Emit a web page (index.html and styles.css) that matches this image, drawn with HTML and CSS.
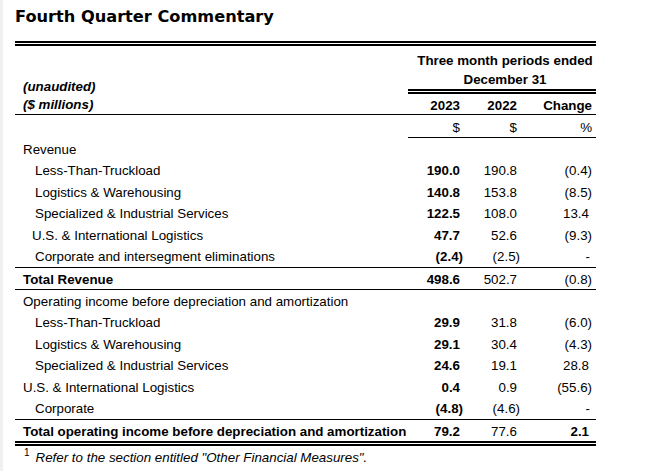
FILE: index.html
```html
<!DOCTYPE html>
<html>
<head>
<meta charset="utf-8">
<link rel="stylesheet" href="styles.css">
</head>
<body>
<div class="page">
  <h1 class="title">Fourth Quarter Commentary</h1>
  <table class="fin">
    <colgroup>
      <col class="c-label"><col class="c-a"><col class="c-b"><col class="c-c">
    </colgroup>
    <tr class="hdr1">
      <td class="lbl-hdr" rowspan="2"><span>(unaudited)</span><br><span>($ millions)</span></td>
      <td colspan="3" class="period">Three month periods ended<br>December 31</td>
    </tr>
    <tr class="hdr2">
      <td class="num pos">2023</td><td class="num pos">2022</td><td class="num neg">Change</td>
    </tr>
    <tr class="units">
      <td></td><td class="num pos ul">$</td><td class="num pos ul">$</td><td class="num neg ul">%</td>
    </tr>
    <tr class="row"><td class="lbl">Revenue</td><td></td><td></td><td></td></tr>
    <tr class="row"><td class="lbl sub">Less-Than-Truckload</td><td class="num pos b">190.0</td><td class="num pos">190.8</td><td class="num neg">(0.4)</td></tr>
    <tr class="row"><td class="lbl sub">Logistics &amp; Warehousing</td><td class="num pos b">140.8</td><td class="num pos">153.8</td><td class="num neg">(8.5)</td></tr>
    <tr class="row"><td class="lbl sub">Specialized &amp; Industrial Services</td><td class="num pos b">122.5</td><td class="num pos">108.0</td><td class="num cpos">13.4</td></tr>
    <tr class="row"><td class="lbl sub2">U.S. &amp; International Logistics</td><td class="num pos b">47.7</td><td class="num pos">52.6</td><td class="num neg">(9.3)</td></tr>
    <tr class="row"><td class="lbl sub">Corporate and intersegment eliminations</td><td class="num neg b">(2.4)</td><td class="num neg">(2.5)</td><td class="num dash">-</td></tr>
    <tr class="row total"><td class="lbl b">Total Revenue</td><td class="num pos b">498.6</td><td class="num pos">502.7</td><td class="num neg">(0.8)</td></tr>
    <tr class="row"><td class="lbl">Operating income before depreciation and amortization</td><td></td><td></td><td></td></tr>
    <tr class="row"><td class="lbl sub">Less-Than-Truckload</td><td class="num pos b">29.9</td><td class="num pos">31.8</td><td class="num neg">(6.0)</td></tr>
    <tr class="row"><td class="lbl sub">Logistics &amp; Warehousing</td><td class="num pos b">29.1</td><td class="num pos">30.4</td><td class="num neg">(4.3)</td></tr>
    <tr class="row"><td class="lbl sub">Specialized &amp; Industrial Services</td><td class="num pos b">24.6</td><td class="num pos">19.1</td><td class="num cpos">28.8</td></tr>
    <tr class="row"><td class="lbl">U.S. &amp; International Logistics</td><td class="num pos b">0.4</td><td class="num pos">0.9</td><td class="num neg">(55.6)</td></tr>
    <tr class="row"><td class="lbl sub">Corporate</td><td class="num neg b">(4.8)</td><td class="num neg">(4.6)</td><td class="num dash">-</td></tr>
    <tr class="row grand"><td class="lbl b">Total operating income before depreciation and amortization</td><td class="num pos b">79.2</td><td class="num pos">77.6</td><td class="num cpos b">2.1</td></tr>
  </table>
  <p class="note"><sup>1</sup><span>Refer to the section entitled "Other Financial Measures".</span></p>
</div>
</body>
</html>
```

FILE: styles.css
```css
html, body {
  margin: 0;
  padding: 0;
  background: #fff;
}
body {
  font-family: "Liberation Sans", Arial, sans-serif;
  font-size: 13.33px;
  color: #000;
}
.page {
  border-left: 3px solid #f0f0f0;
  padding-left: 12px;
  min-height: 471px;
  box-sizing: border-box;
}
.title {
  font-family: "DejaVu Sans", Verdana, sans-serif;
  font-weight: bold;
  font-size: 16.2px;
  line-height: 20px;
  margin: 0;
  padding-top: 7px;
  height: 41px;
  box-sizing: border-box;
}
.fin {
  border-collapse: collapse;
  width: 581px;
  border-top: 5px double #000;
}
.fin td {
  padding: 0;
  white-space: nowrap;
}
.c-label { width: 393px; }
.c-a { width: 56px; }
.c-b { width: 57px; }
.c-c { width: 75px; }

.lbl-hdr {
  vertical-align: bottom;
  font-weight: bold;
  font-style: italic;
  line-height: 18px;
  border-bottom: 1px solid #000;
}
.fin td.period {
  text-align: center;
  font-weight: bold;
  line-height: 19px;
  padding: 5px 0 0 6px;
  border-bottom: 5px double #000;
}
.fin .hdr2 td {
  font-weight: bold;
  height: 18px;
  padding-top: 2px;
  border-bottom: 1px solid #000;
}
.fin .units td {
  height: 20px;
  padding-top: 2px;
}
.units td.ul {
  border-bottom: 1px solid #000;
}
.num { text-align: right; }
.fin td.num.pos { padding-right: 4px; }
.fin td.num.neg { padding-right: 4px; }
.fin .row td.num.neg { padding-right: 1px; }
.fin .row td:nth-child(4).num.neg { padding-right: 4px; }
.fin .row td.num.cpos { padding-right: 7px; }
.fin .row td.num.dash { padding-right: 6px; }
.fin .row td {
  height: 20.5px;
  vertical-align: middle;
  padding-top: 1px;
}
.b { font-weight: bold; }
.fin td.lbl, .fin td.lbl-hdr { padding-left: 8px; }
.fin td.lbl.sub { padding-left: 20px; }
.fin td.lbl.sub2 { padding-left: 17px; }
.fin .row.total td {
  border-top: 1px solid #000;
  border-bottom: 1px solid #000;
  height: 20px;
}
.fin .row.grand td {
  border-top: 1px solid #000;
  border-bottom: 5px double #000;
  height: 20px;
}
.note {
  margin: 0;
  padding: 3px 0 0 9px;
  font-size: 13.33px;
  line-height: 17px;
}
.note sup {
  font-size: 10px;
  vertical-align: 6px;
  line-height: 0;
  margin-right: 6px;
  font-style: normal;
}
.note span {
  font-style: italic;
}
```
